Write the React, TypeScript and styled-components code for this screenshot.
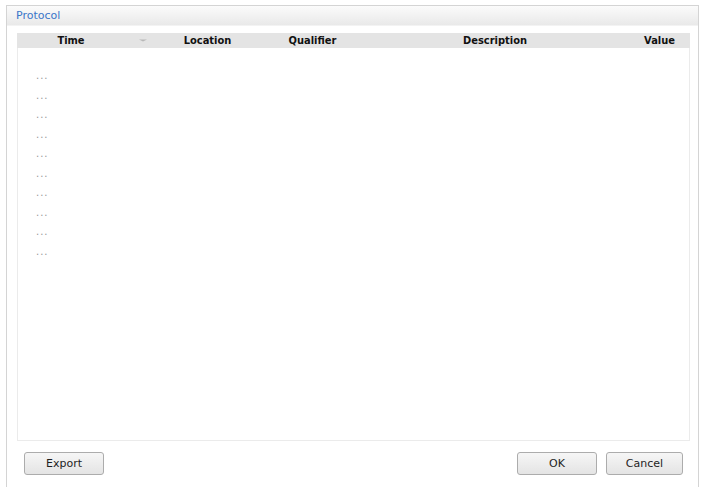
import styled, { createGlobalStyle } from "styled-components";

const Global = createGlobalStyle`
  html, body {
    margin: 0;
    padding: 0;
    background: #ffffff;
  }
  body {
    font-family: "DejaVu Sans", Verdana, sans-serif;
    font-size: 11px;
  }
`;

const Page = styled.div`
  padding: 5px 5px 0 6px;
  height: 487px;
  box-sizing: border-box;
`;

const Window = styled.div`
  height: 100%;
  border: 1px solid #d4d4d4;
  border-bottom: none;
  display: flex;
  flex-direction: column;
  box-sizing: border-box;
`;

const TitleBar = styled.div`
  height: 18px;
  padding: 0 0 1px 9px;
  display: flex;
  align-items: center;
  color: #3b76c9;
  background: linear-gradient(#fbfbfb, #e9e9e9);
  border-bottom: 1px solid #f3f3f3;
`;

const Content = styled.div`
  flex: 1;
  display: flex;
  flex-direction: column;
  padding: 7px 8px 0 10px;
`;

const Table = styled.div`
  display: flex;
  flex-direction: column;
  height: 408px;
`;

const Header = styled.div`
  display: grid;
  grid-template-columns: 108px 35px 95px 115px 250px 1fr;
  height: 15px;
  background: #e4e4e4;
  align-items: center;
  font-family: "DejaVu Sans Condensed", "DejaVu Sans", sans-serif;
  font-weight: bold;
  font-size: 11px;
  color: #111111;
`;

const HeadCell = styled.div<{ $align?: string }>`
  padding-right: ${(p) => (p.$align === "right" ? "15px" : "0")};
  display: flex;
  justify-content: ${(p) => (p.$align === "right" ? "flex-end" : "center")};
  align-items: center;
`;

const Body = styled.div`
  flex: 1;
  background: #ffffff;
  border: 1px solid #ebebeb;
  border-top: none;
  padding-top: 18px;
`;

const Row = styled.div`
  height: 19.5px;
  padding-left: 18px;
  display: flex;
  align-items: center;
  color: #999999;
  letter-spacing: 1px;
  font-size: 10px;
`;

const Footer = styled.div`
  display: flex;
  align-items: center;
  padding: 11px 7px 0 7px;
  gap: 9px;
`;

const Spacer = styled.div`
  flex: 1;
`;

const Button = styled.button<{ $w?: number }>`
  width: ${(p) => p.$w || 80}px;
  height: 23px;
  border: 1px solid #acacac;
  border-radius: 3px;
  background: linear-gradient(#f6f6f6, #e4e4e4);
  font-family: "DejaVu Sans", Verdana, sans-serif;
  font-size: 11px;
  color: #1e1e1e;
  padding: 0;
`;

const rows = Array.from({ length: 10 }, (_, i) => i);

export default function App() {
  return (
    <Page>
      <Global />
      <Window>
        <TitleBar>Protocol</TitleBar>
        <Content>
          <Table>
            <Header>
              <HeadCell>Time</HeadCell>
              <HeadCell>
                <svg width="8" height="3" viewBox="0 0 8 3">
                  <path d="M0 0.5 H8 L4 2.5 Z" fill="#b8b8b8" />
                </svg>
              </HeadCell>
              <HeadCell>Location</HeadCell>
              <HeadCell>Qualifier</HeadCell>
              <HeadCell>Description</HeadCell>
              <HeadCell $align="right">Value</HeadCell>
            </Header>
            <Body>
              {rows.map((i) => (
                <Row key={i}>...</Row>
              ))}
            </Body>
          </Table>
          <Footer>
            <Button>Export</Button>
            <Spacer />
            <Button>OK</Button>
            <Button $w={77}>Cancel</Button>
          </Footer>
        </Content>
      </Window>
    </Page>
  );
}
